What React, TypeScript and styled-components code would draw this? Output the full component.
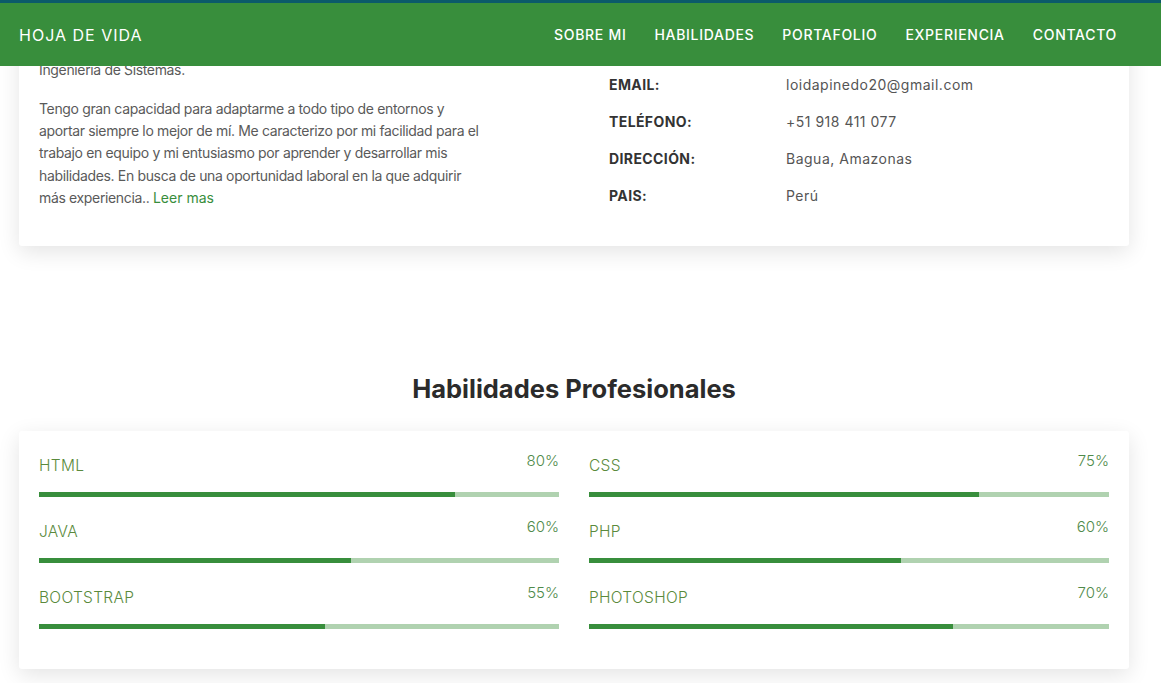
import React from 'react';
import styled, { createGlobalStyle } from 'styled-components';

const GlobalStyle = createGlobalStyle`
    * { box-sizing: border-box; }
    body {
        margin: 0;
        background: #fff;
        font-family: Inter, "Open Sans", sans-serif;
        color: #555;
        overflow: hidden;
    }
`

const Header = styled.header`
    position: fixed;
    top: 0;
    left: 0;
    right: 0;
    z-index: 10;
    height: 66px;
    background: #388e3c;
    border-top: 3px solid #0b5a6a;
    display: flex;
    align-items: center;
    justify-content: space-between;
    padding: 0 44px 0 19px;
`
const Brand = styled.a`
    color: #fff;
    font-size: 16px;
    letter-spacing: 1px;
    text-decoration: none;
`
const Nav = styled.nav`
    display: flex;
    gap: 28px;
`
const NavLink = styled.a`
    color: #fff;
    font-size: 14px;
    font-weight: 500;
    letter-spacing: 0.7px;
    text-decoration: none;
`

/* content is shown as if scrolled: the first card sits partly under the bar */
const Page = styled.main`
    margin-top: -28px;
    padding: 0 32px 40px 19px;
`
const Card = styled.section`
    background: #fff;
    border-radius: 3px;
    box-shadow: 0 6px 22px rgba(0, 0, 0, 0.11);
    padding: 20px;
`
const AboutGrid = styled.div`
    display: grid;
    grid-template-columns: 450px 1fr;
    column-gap: 120px;
    align-items: start;
`
const Para = styled.p`
    margin: 0 0 16px;
    font-size: 14px;
    letter-spacing: -0.35px;
    line-height: 22.4px;
    color: #5a5a5a;
`
const More = styled.a`
    color: #388e3c;
    letter-spacing: 0;
    text-decoration: none;
`
const InfoList = styled.dl`
    display: grid;
    grid-template-columns: 177px 1fr;
    align-content: start;
    margin: 0;
`
const InfoLabel = styled.dt`
    font-size: 14px;
    font-weight: 700;
    letter-spacing: 0.4px;
    color: #333;
    line-height: 37px;
`
const InfoValue = styled.dd`
    margin: 0;
    font-size: 14px;
    letter-spacing: 0.5px;
    color: #555;
    line-height: 37px;
`
const SectionTitle = styled.h2`
    margin: 127px 0 27px;
    text-align: center;
    font-size: 25.5px;
    line-height: 31px;
    font-weight: 700;
    color: #2b2b2b;
`
const SkillsGrid = styled.div`
    display: grid;
    grid-template-columns: 1fr 1fr;
    column-gap: 30px;
`
const Skill = styled.div`
    margin-bottom: 20px;
`
const SkillHead = styled.div`
    display: flex;
    justify-content: space-between;
    align-items: flex-start;
    height: 28px;
    margin-bottom: 13px;
`
const SkillName = styled.span`
    padding-top: 6px;
    font-size: 15.5px;
    font-weight: 300;
    letter-spacing: 0.3px;
    line-height: 18px;
    color: #5a8a3c;
    text-transform: uppercase;
`
const SkillPct = styled.span`
    padding-top: 1px;
    font-size: 15px;
    font-weight: 300;
    line-height: 18px;
    color: #4f8a4a;
`
const Track = styled.div`
    height: 5px;
    background: #b0d2b0;
`
const Fill = styled.div`
    height: 100%;
    background: #388e3c;
`

const info = [
    ['NOMBRE:', 'Loida Pinedo'],
    ['EDAD:', '21 años'],
    ['EMAIL:', 'loidapinedo20@gmail.com'],
    ['TELÉFONO:', '+51 918 411 077'],
    ['DIRECCIÓN:', 'Bagua, Amazonas'],
    ['PAIS:', 'Perú'],
];

const skills = [
    { name: 'HTML', value: 80 },
    { name: 'CSS', value: 75 },
    { name: 'JAVA', value: 60 },
    { name: 'PHP', value: 60 },
    { name: 'BOOTSTRAP', value: 55 },
    { name: 'PHOTOSHOP', value: 70 },
];

const App: React.FC = () => {
    return (
        <>
            <GlobalStyle />
            <Header>
                <Brand href="#">HOJA DE VIDA</Brand>
                <Nav>
                    <NavLink href="#">SOBRE MI</NavLink>
                    <NavLink href="#">HABILIDADES</NavLink>
                    <NavLink href="#">PORTAFOLIO</NavLink>
                    <NavLink href="#">EXPERIENCIA</NavLink>
                    <NavLink href="#">CONTACTO</NavLink>
                </Nav>
            </Header>
            <Page>
                <Card>
                    <AboutGrid>
                        <div>
                            <Para>
                                Hola, soy Loida Pinedo, me apasiona la tecnología y el<br />
                                desarrollo web. Actualmente estudio en la Universidad<br />
                                Nacional Toribio Rodríguez de Mendoza, la carrera de<br />
                                Ingeniería de Sistemas.
                            </Para>
                            <Para>
                                Tengo gran capacidad para adaptarme a todo tipo de entornos y
                                aportar siempre lo mejor de mí. Me caracterizo por mi facilidad para el
                                trabajo en equipo y mi entusiasmo por aprender y desarrollar mis
                                habilidades. En busca de una oportunidad laboral en la que adquirir
                                más experiencia.. <More href="#">Leer mas</More>
                            </Para>
                        </div>
                        <InfoList>
                            {info.map(([label, value]) => (
                                <React.Fragment key={label}>
                                    <InfoLabel>{label}</InfoLabel>
                                    <InfoValue>{value}</InfoValue>
                                </React.Fragment>
                            ))}
                        </InfoList>
                    </AboutGrid>
                </Card>

                <SectionTitle>Habilidades Profesionales</SectionTitle>
                <Card>
                    <SkillsGrid>
                        {skills.map((s) => (
                            <Skill key={s.name}>
                                <SkillHead>
                                    <SkillName>{s.name}</SkillName>
                                    <SkillPct>{s.value}%</SkillPct>
                                </SkillHead>
                                <Track>
                                    <Fill style={{ width: `${s.value}%` }} />
                                </Track>
                            </Skill>
                        ))}
                    </SkillsGrid>
                </Card>
            </Page>
        </>
    );
};

export default App;
